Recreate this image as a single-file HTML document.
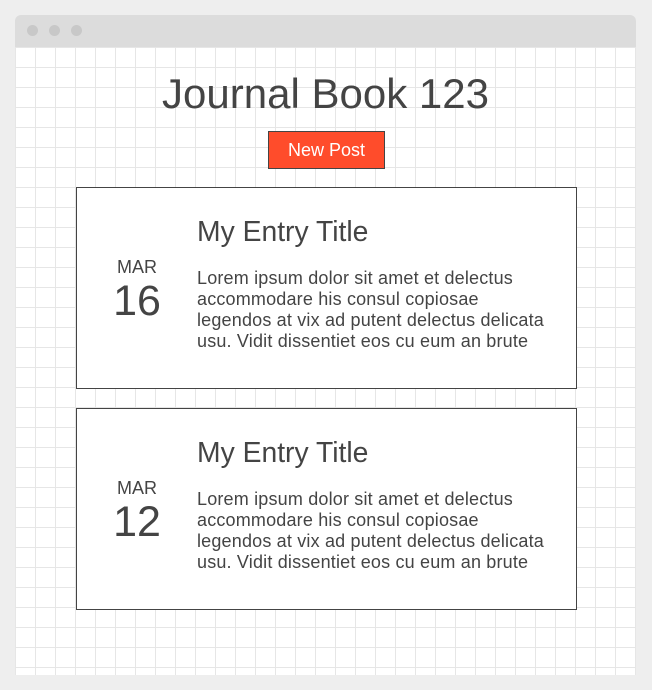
<!DOCTYPE html>
<html><head><style>
body{margin:0;width:652px;height:690px;background:#eeeeee;font-family:"Liberation Sans",sans-serif;color:#444;position:relative;overflow:hidden}
.win{position:absolute;left:15px;top:15px;width:621px;height:660px;background:#dcdcdc;border-radius:6px 6px 0 0;overflow:hidden}
.dot{position:absolute;top:10px;width:11px;height:11px;border-radius:50%;background:#c8c8c8}
.content{position:absolute;left:0;top:32px;width:621px;height:628px;background-color:#fff;
background-image:linear-gradient(to right,#e6e6e6 1px,transparent 1px),linear-gradient(to bottom,#e6e6e6 1px,transparent 1px);
background-size:20px 20px;background-position:0 0}
h1{position:absolute;left:0;width:621px;top:23px;margin:0;text-align:center;font-weight:normal;font-size:42px;color:#444}
.btn{position:absolute;left:253px;top:84px;width:115px;height:36px;background:#ff4c2b;border:1px solid #444;color:#fff;font-size:18px;text-align:center;line-height:36px}
.card{position:absolute;left:61px;width:499px;height:200px;background:#fff;border:1px solid #444}
.mon{position:absolute;left:0;width:120px;text-align:center;top:69px;font-size:18px}
.day{position:absolute;left:0;width:120px;text-align:center;top:89px;font-size:43px}
.t{position:absolute;left:120px;top:27px;font-size:28.3px}
.p{position:absolute;left:120px;top:80px;width:356px;font-size:18px;line-height:21px;letter-spacing:0.18px}
</style></head><body>
<div class="win">
<div class="dot" style="left:12px"></div><div class="dot" style="left:34px"></div><div class="dot" style="left:56px"></div>
<div class="content">
<h1>Journal Book 123</h1>
<div class="btn">New Post</div>
<div class="card" style="top:140px">
<div class="mon">MAR</div><div class="day">16</div>
<div class="t">My Entry Title</div>
<div class="p">Lorem ipsum dolor sit amet et delectus accommodare his consul copiosae legendos at vix ad putent delectus delicata usu. Vidit dissentiet eos cu eum an brute</div>
</div>
<div class="card" style="top:361px">
<div class="mon">MAR</div><div class="day">12</div>
<div class="t">My Entry Title</div>
<div class="p">Lorem ipsum dolor sit amet et delectus accommodare his consul copiosae legendos at vix ad putent delectus delicata usu. Vidit dissentiet eos cu eum an brute</div>
</div>
</div>
</div>
</body></html>
